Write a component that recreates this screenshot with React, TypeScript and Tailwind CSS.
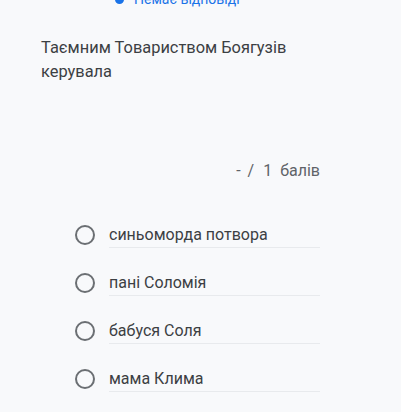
const options = ['синьоморда потвора', 'пані Соломія', 'бабуся Соля', 'мама Клима'];

export default function App() {
  return (
    <div className="w-[401px] h-[412px] overflow-hidden bg-[#f8f9fb] font-['Roboto',sans-serif]">
      {/* status row, cut at top */}
      <div className="-mt-[11px] h-[20px] flex items-center pl-[115px] gap-[10px] text-[14px] text-[#1a73e8]">
        <span className="w-[9px] h-[9px] rounded-full bg-[#1a73e8]" />
        <span>Немає відповіді</span>
      </div>

      <div className="mt-[27px] pl-[41px] w-[335px] text-[16.4px] leading-[24px] text-[#3c4043]">
        Таємним Товариством Боягузів керувала
      </div>

      <div className="mt-[75px] h-[24px] flex items-center justify-end pr-[81px] gap-[7px] text-[16px] text-[#5f6368]">
        <span>-</span>
        <span>/</span>
        <span className="ml-[2px]">1</span>
        <span className="ml-[1px]">балів</span>
      </div>

      <div className="mt-[28px] pl-[75px]">
        {options.map((o) => (
          <div key={o} className="h-[48px] flex items-center">
            <span className="w-[20px] h-[20px] rounded-full border-2 border-[#6b6f73] shrink-0" />
            <div className="ml-[14px] w-[211px] h-[48px] flex items-center relative">
              <span className="text-[16px] text-[#3c4043]">{o}</span>
              <span className="absolute left-0 right-0 top-[36px] h-px bg-[#e8eaed]" />
            </div>
          </div>
        ))}
      </div>
    </div>
  );
}
